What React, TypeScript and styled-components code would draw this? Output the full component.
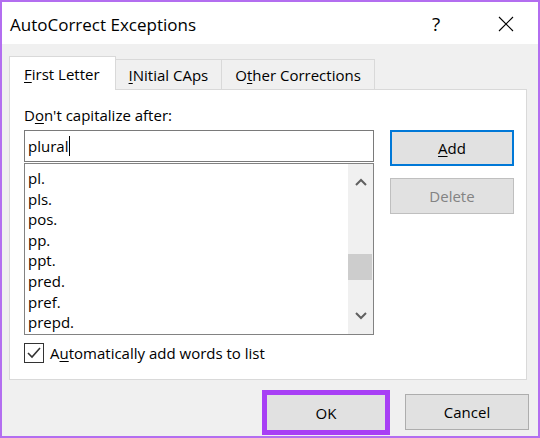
import React from 'react';
import styled, { createGlobalStyle } from 'styled-components';

const GlobalStyle = createGlobalStyle`
  html, body {
    margin: 0;
    padding: 0;
    background: #ffffff;
  }
  * {
    box-sizing: border-box;
  }
`;

const Window = styled.div`
  width: 540px;
  height: 438px;
  border: 2px solid #b36ef0;
  display: flex;
  flex-direction: column;
  font-family: 'Open Sans', 'Noto Sans', sans-serif;
  color: #000000;
  overflow: hidden;
`;

const TitleBar = styled.div`
  height: 42px;
  background: #ffffff;
  display: flex;
  align-items: center;
  padding-left: 8px;
  padding-top: 2px;
`;

const Title = styled.div`
  font-size: 17px;
  flex: 1;
`;

const CaptionButton = styled.div<{ $w: number }>`
  width: ${(p) => p.$w}px;
  height: 40px;
  display: flex;
  align-items: center;
  justify-content: center;
  font-size: 19px;
`;

const Body = styled.div`
  flex: 1;
  background: #f0f0f0;
  padding: 12px 11px 0 7px;
  display: flex;
  flex-direction: column;
`;

const TabStrip = styled.div`
  display: flex;
  align-items: flex-end;
  height: 34px;
  margin-bottom: -1px;
  position: relative;
  z-index: 1;
`;

const Tab = styled.div<{ $active?: boolean }>`
  height: ${(p) => (p.$active ? 34 : 31)}px;
  padding: ${(p) => (p.$active ? '0 15px 0 14px' : '0 13px')};
  margin-left: -1px;
  display: flex;
  align-items: center;
  font-size: 15px;
  background: ${(p) => (p.$active ? '#ffffff' : '#f0f0f0')};
  border: 1px solid #d9d9d9;
  border-bottom: ${(p) => (p.$active ? 'none' : '1px solid #d9d9d9')};
  position: relative;
  z-index: ${(p) => (p.$active ? 2 : 1)};
  &:first-child {
    margin-left: 0;
  }
`;

const Key = styled.span`
  text-decoration: underline;
  text-underline-offset: 2px;
  text-decoration-thickness: 1px;
`;

const Panel = styled.div`
  height: 291px;
  background: #ffffff;
  border: 1px solid #d9d9d9;
  padding: 15px 0 0 14px;
  display: grid;
  grid-template-columns: 350px 124px;
  grid-template-rows: auto 1fr;
  column-gap: 16px;
  row-gap: 5px;
  align-content: start;
`;

const FieldLabel = styled.div`
  grid-column: 1 / span 2;
  font-size: 15px;
  line-height: 20px;
`;

const LeftColumn = styled.div`
  display: flex;
  flex-direction: column;
`;

const RightColumn = styled.div`
  display: flex;
  flex-direction: column;
  gap: 12px;
`;

const TextInput = styled.div`
  height: 32px;
  border: 1px solid #7a7a7a;
  display: flex;
  align-items: center;
  padding-left: 3px;
  font-size: 15px;
`;

const Caret = styled.span`
  display: inline-block;
  width: 1px;
  height: 20px;
  background: #000000;
  margin-left: 1px;
`;

const ListBox = styled.div`
  margin-top: 1px;
  height: 172px;
  border: 1px solid #828282;
  display: flex;
`;

const Items = styled.div`
  flex: 1;
  padding: 4px 0 0 3px;
  overflow: hidden;
`;

const Item = styled.div`
  font-size: 15px;
  line-height: 20.6px;
`;

const ScrollBar = styled.div`
  width: 25px;
  background: #f0f0f0;
  display: flex;
  flex-direction: column;
`;

const ScrollArrow = styled.div`
  height: 36px;
  display: flex;
  align-items: center;
  justify-content: center;
`;

const ScrollTrack = styled.div`
  flex: 1;
`;

const ScrollThumb = styled.div`
  height: 26px;
  width: 24px;
  background: #cdcdcd;
`;

const CheckRow = styled.div`
  margin-top: 8px;
  display: flex;
  align-items: center;
  gap: 6px;
  font-size: 15px;
`;

const CheckBox = styled.div`
  width: 20px;
  height: 20px;
  border: 1px solid #333333;
  display: flex;
  align-items: center;
  justify-content: center;
`;

const Button = styled.div<{ $primary?: boolean; $disabled?: boolean; $w?: number }>`
  width: ${(p) => p.$w ?? 124}px;
  height: 36px;
  background: #e1e1e1;
  border: ${(p) => (p.$primary ? '2px solid #0078d7' : `1px solid ${p.$disabled ? '#bfbfbf' : '#adadad'}`)};
  color: ${(p) => (p.$disabled ? '#838383' : '#000000')};
  display: flex;
  align-items: center;
  justify-content: center;
  font-size: 15px;
`;

const Footer = styled.div`
  display: flex;
  justify-content: flex-end;
  align-items: flex-start;
  gap: 19px;
  padding-top: 14px;
  margin-right: -2px;
`;

const HighlightedButton = styled(Button)`
  height: 37px;
  outline: 5px solid #a83ff5;
  outline-offset: -1px;
`;

const Chevron = ({ up }: { up?: boolean }) => (
  <svg width="12" height="8" viewBox="0 0 12 8">
    <polyline
      points={up ? '1,7 6,2 11,7' : '1,1 6,6 11,1'}
      fill="none"
      stroke="#606060"
      strokeWidth="2"
    />
  </svg>
);

const words = ['pl.', 'pls.', 'pos.', 'pp.', 'ppt.', 'pred.', 'pref.', 'prepd.'];

export default function App() {
  return (
    <>
      <GlobalStyle />
      <Window>
        <TitleBar>
          <Title>AutoCorrect Exceptions</Title>
          <CaptionButton $w={76}>?</CaptionButton>
          <CaptionButton $w={64}>
            <svg width="16" height="16" viewBox="0 0 16 16">
              <path d="M1 1 L15 15 M15 1 L1 15" stroke="#000" strokeWidth="1.1" />
            </svg>
          </CaptionButton>
        </TitleBar>
        <Body>
          <TabStrip>
            <Tab $active>
              <span>
                <Key>F</Key>irst Letter
              </span>
            </Tab>
            <Tab>
              <span>
                <Key>I</Key>Nitial CAps
              </span>
            </Tab>
            <Tab>
              <span>
                O<Key>t</Key>her Corrections
              </span>
            </Tab>
          </TabStrip>
          <Panel>
            <FieldLabel>
              D<Key>o</Key>n't capitalize after:
            </FieldLabel>
            <LeftColumn>
              <TextInput>
                plural
                <Caret />
              </TextInput>
              <ListBox>
                <Items>
                  {words.map((w) => (
                    <Item key={w}>{w}</Item>
                  ))}
                </Items>
                <ScrollBar>
                  <ScrollArrow>
                    <Chevron up />
                  </ScrollArrow>
                  <ScrollTrack>
                    <ScrollThumb style={{ marginTop: 54 }} />
                  </ScrollTrack>
                  <ScrollArrow>
                    <Chevron />
                  </ScrollArrow>
                </ScrollBar>
              </ListBox>
              <CheckRow>
                <CheckBox>
                  <svg width="14" height="12" viewBox="0 0 14 12">
                    <polyline points="1,6 5,10 13,1" fill="none" stroke="#333" strokeWidth="1.6" />
                  </svg>
                </CheckBox>
                <span>
                  A<Key>u</Key>tomatically add words to list
                </span>
              </CheckRow>
            </LeftColumn>
            <RightColumn>
              <Button $primary>
                <span>
                  <Key>A</Key>dd
                </span>
              </Button>
              <Button $disabled>Delete</Button>
            </RightColumn>
          </Panel>
          <Footer>
            <HighlightedButton $w={120}>OK</HighlightedButton>
            <Button>Cancel</Button>
          </Footer>
        </Body>
      </Window>
    </>
  );
}
